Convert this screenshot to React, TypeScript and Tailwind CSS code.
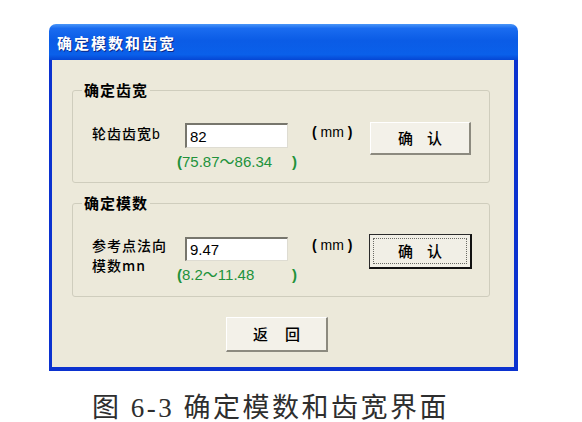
export default function App() {
  const ui = { fontFamily: '"Noto Sans CJK SC", "Liberation Sans", sans-serif' };
  const num = { fontFamily: '"Liberation Sans", "Noto Sans CJK SC", sans-serif' };

  return (
    <div className="w-[582px] h-[422px] bg-white pt-[24px] pl-[49px] overflow-hidden">
      {/* Dialog window */}
      <div className="w-[469px] flex flex-col rounded-t-[7px] overflow-hidden" style={ui}>
        {/* Title bar */}
        <div className="h-[36px] flex items-center pl-[8px] bg-[linear-gradient(180deg,#4a96f8_0%,#1a6cf0_12%,#0b5ce6_45%,#0a60ea_85%,#0546d4_100%)]">
          <span className="text-white font-bold text-[15px] tracking-[2px] leading-none [text-shadow:1px_1px_0_#0a2a8a]">
            确定模数和齿宽
          </span>
        </div>

        {/* Body */}
        <div className="h-[311px] bg-[#ECE9DA] border-l-[3px] border-r-[4px] border-b-[4px] border-[#0b32cf] pl-[20px] pt-[23px] text-[14px] text-black">
          {/* Group 1 */}
          <fieldset className="w-[418px] border border-[#cfcdbd] rounded-[3px] pb-[12px]">
            <legend className="ml-[9px] px-[2px] font-bold text-[15px] leading-[14px] tracking-[1px]">确定齿宽</legend>
            <div className="flex items-start pl-[19px] mt-[25px]">
              <div className="w-[93px] pt-[1px] leading-[20px] font-medium tracking-[1px]">
                轮齿齿宽<span style={num}>b</span>
              </div>
              <div className="w-[103px] flex flex-col">
                <input
                  readOnly
                  defaultValue="82"
                  className="mt-[1px] h-[25px] w-[103px] bg-white px-[3px] text-[15px] outline-none border-t-[2px] border-l-[2px] border-t-[#77766d] border-l-[#77766d] border-b border-r border-b-[#dedcd2] border-r-[#dedcd2]"
                  style={num}
                />
                <div className="-ml-[8px] mt-[6px] w-[120px] flex justify-between leading-[16px] text-[15px] text-[#21923a] whitespace-nowrap" style={num}>
                  <span><b>(</b>75.87～86.34</span>
                  <b>)</b>
                </div>
              </div>
              <div className="ml-[24px] w-[58px] leading-[20px] text-[14px]" style={num}>
                <b>(</b> mm <b>)</b>
              </div>
              <button className="w-[101px] h-[33px] flex items-center justify-center gap-[14px] bg-[#F3F1E9] border-t border-l border-t-white border-l-white border-b-[2px] border-r-[2px] border-b-[#8c8a7f] border-r-[#8c8a7f] text-[15px] font-medium">
                <span>确</span>
                <span>认</span>
              </button>
            </div>
          </fieldset>

          {/* Group 2 */}
          <fieldset className="w-[418px] mt-[13px] border border-[#cfcdbd] rounded-[3px] pb-[13px]">
            <legend className="ml-[9px] px-[2px] font-bold text-[15px] leading-[14px] tracking-[1px]">确定模数</legend>
            <div className="flex items-start pl-[19px] mt-[24px]">
              <div className="w-[93px] pt-[1px] leading-[20px] font-medium tracking-[1px]">
                参考点法向
                <br />
                模数mn
              </div>
              <div className="w-[103px] flex flex-col">
                <input
                  readOnly
                  defaultValue="9.47"
                  className="mt-[3px] h-[24px] w-[103px] bg-white px-[3px] text-[15px] outline-none border-t-[2px] border-l-[2px] border-t-[#77766d] border-l-[#77766d] border-b border-r border-b-[#dedcd2] border-r-[#dedcd2]"
                  style={num}
                />
                <div className="-ml-[8px] mt-[6px] w-[120px] flex justify-between leading-[16px] text-[15px] text-[#21923a] whitespace-nowrap" style={num}>
                  <span><b>(</b>8.2～11.48</span>
                  <b>)</b>
                </div>
              </div>
              <div className="ml-[24px] w-[57px] pt-[1px] leading-[20px] text-[14px]" style={num}>
                <b>(</b> mm <b>)</b>
              </div>
              <button className="w-[103px] h-[35px] flex p-[3px] bg-[#F1EFE6] border-t border-l border-t-[#2a2a2a] border-l-[#2a2a2a] border-b-[2px] border-r-[2px] border-b-[#111] border-r-[#111] text-[15px] font-medium">
                <span className="flex-1 flex items-center justify-center gap-[14px] border border-dotted border-[#6a6a64]">
                  <span>确</span>
                  <span>认</span>
                </span>
              </button>
            </div>
          </fieldset>

          {/* Return */}
          <button className="ml-[154px] mt-[20px] w-[102px] h-[35px] flex items-center justify-center gap-[17px] bg-[#F3F1E9] border-t border-l border-t-white border-l-white border-b-[2px] border-r-[2px] border-b-[#8c8a7f] border-r-[#8c8a7f] text-[15px] font-medium">
            <span>返</span>
            <span>回</span>
          </button>
        </div>
      </div>

      {/* Caption */}
      <div
        className="ml-[43px] mt-[23px] text-[27px] leading-[28px] tracking-[2.5px] text-[#2e2e2e] whitespace-nowrap"
        style={{ fontFamily: '"Liberation Serif", "Noto Sans CJK SC", serif' }}
      >
        图 6-3 确定模数和齿宽界面
      </div>
    </div>
  );
}
